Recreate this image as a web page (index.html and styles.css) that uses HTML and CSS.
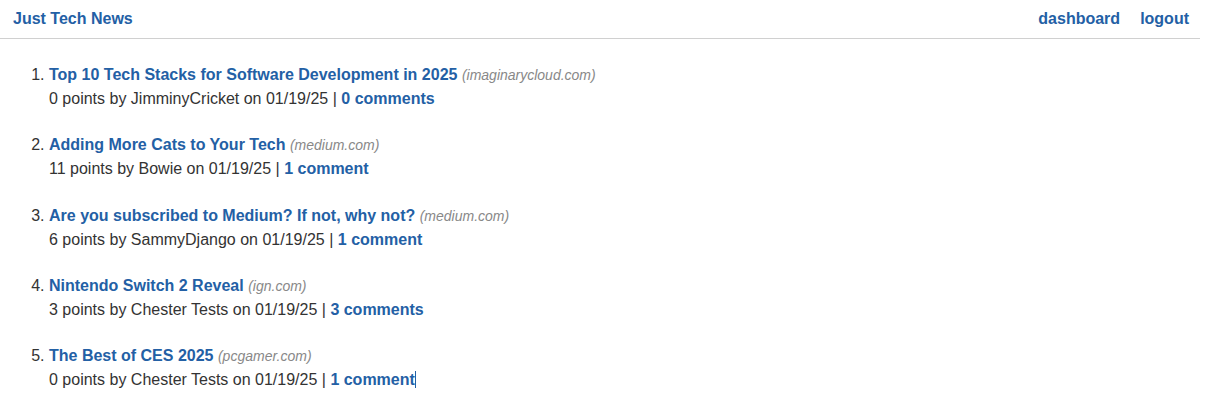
FILE: index.html
```html
<!DOCTYPE html>
<html>
<head>
<meta charset="utf-8">
<link rel="stylesheet" href="styles.css">
</head>
<body>
<header class="topbar">
  <a class="brand" href="#">Just Tech News</a>
  <nav class="nav">
    <a href="#">dashboard</a>
    <a href="#">logout</a>
  </nav>
</header>
<main>
  <ol class="posts">
    <li class="post">
      <div class="title-line"><a class="title" href="#">Top 10 Tech Stacks for Software Development in 2025</a> <span class="domain">(imaginarycloud.com)</span></div>
      <div class="meta">0 points by JimminyCricket on 01/19/25 | <a href="#">0 comments</a></div>
    </li>
    <li class="post">
      <div class="title-line"><a class="title" href="#">Adding More Cats to Your Tech</a> <span class="domain">(medium.com)</span></div>
      <div class="meta">11 points by Bowie on 01/19/25 | <a href="#">1 comment</a></div>
    </li>
    <li class="post">
      <div class="title-line"><a class="title" href="#">Are you subscribed to Medium? If not, why not?</a> <span class="domain">(medium.com)</span></div>
      <div class="meta">6 points by SammyDjango on 01/19/25 | <a href="#">1 comment</a></div>
    </li>
    <li class="post">
      <div class="title-line"><a class="title" href="#">Nintendo Switch 2 Reveal</a> <span class="domain">(ign.com)</span></div>
      <div class="meta">3 points by Chester Tests on 01/19/25 | <a href="#">3 comments</a></div>
    </li>
    <li class="post">
      <div class="title-line"><a class="title" href="#">The Best of CES 2025</a> <span class="domain">(pcgamer.com)</span></div>
      <div class="meta">0 points by Chester Tests on 01/19/25 | <a class="caret" href="#">1 comment</a></div>
    </li>
  </ol>
</main>
</body>
</html>
```

FILE: styles.css
```css
body {
  margin: 0;
  font-family: "Liberation Sans", Arial, sans-serif;
  font-size: 16px;
  color: #333;
  background: #fff;
}
a {
  color: #2360a5;
  text-decoration: none;
  font-weight: bold;
}
.topbar {
  display: flex;
  justify-content: space-between;
  align-items: center;
  height: 37px;
  margin-right: 8px;
  padding: 0 11px 1px 13px;
  border-bottom: 1px solid #d0d0d0;
}
.nav {
  display: flex;
  gap: 20px;
}
.posts {
  margin: 24px 0 0 0;
  padding-left: 49px;
}
.post {
  margin-bottom: 22.3px;
}
.title-line,
.meta {
  height: 24px;
  line-height: 24px;
}
.domain {
  font-size: 14px;
  line-height: 1;
  font-style: italic;
  color: #888;
}
.caret {
  border-right: 1px solid #2360a5;
}
```
